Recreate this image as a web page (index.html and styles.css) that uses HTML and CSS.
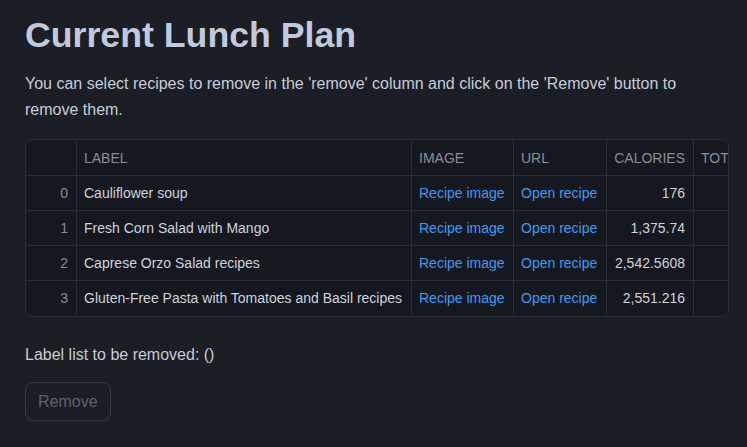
FILE: index.html
```html
<!DOCTYPE html>
<html>
<head>
<meta charset="utf-8">
<link rel="stylesheet" href="styles.css">
</head>
<body>
<main class="page">
  <h1 class="title">Current Lunch Plan</h1>
  <p class="intro">You can select recipes to remove in the 'remove' column and click on the 'Remove' button to remove them.</p>
  <div class="table-wrap">
    <table class="grid">
      <thead>
        <tr>
          <th class="c-idx"></th>
          <th class="c-label">LABEL</th>
          <th class="c-img">IMAGE</th>
          <th class="c-url">URL</th>
          <th class="c-cal">CALORIES</th>
          <th class="c-tot">TOTAL</th>
        </tr>
      </thead>
      <tbody>
        <tr><td class="c-idx">0</td><td>Cauliflower soup</td><td class="link">Recipe image</td><td class="link">Open recipe</td><td class="num">176</td><td></td></tr>
        <tr><td class="c-idx">1</td><td>Fresh Corn Salad with Mango</td><td class="link">Recipe image</td><td class="link">Open recipe</td><td class="num">1,375.74</td><td></td></tr>
        <tr><td class="c-idx">2</td><td>Caprese Orzo Salad recipes</td><td class="link">Recipe image</td><td class="link">Open recipe</td><td class="num">2,542.5608</td><td></td></tr>
        <tr><td class="c-idx">3</td><td>Gluten-Free Pasta with Tomatoes and Basil recipes</td><td class="link">Recipe image</td><td class="link">Open recipe</td><td class="num">2,551.216</td><td></td></tr>
      </tbody>
    </table>
  </div>
  <p class="removed">Label list to be removed: ()</p>
  <button class="btn" disabled>Remove</button>
</main>
</body>
</html>
```
FILE: styles.css
```css
html, body {
  margin: 0;
  padding: 0;
  background: #1b1e24;
  font-family: "Liberation Sans", Arial, sans-serif;
  color: #c6ccd8;
}
.page {
  padding: 14px 18px 0 25px;
}
.title {
  margin: 0;
  font-size: 35.7px;
  line-height: 42px;
  font-weight: 700;
  color: #c2c9dc;
}
.intro {
  margin: 15px 0 0;
  font-size: 16px;
  line-height: 26px;
  color: #c6ccd8;
}
.table-wrap {
  margin-top: 16px;
  width: 704px;
  height: 178px;
  box-sizing: border-box;
  border: 1px solid #2a2e35;
  border-radius: 8px;
  background: #15181e;
  overflow: hidden;
}
.grid {
  border-collapse: collapse;
  font-size: 14px;
  white-space: nowrap;
  table-layout: fixed;
  width: 740px;
}
.grid th, .grid td {
  border-right: 1px solid #2a2e35;
  border-bottom: 1px solid #2a2e35;
  padding: 0 8px 0 7px;
  height: 34px;
  overflow: hidden;
  text-align: left;
}
.grid th {
  height: 35px;
  font-weight: 400;
  color: #878e9b;
}
.grid tbody tr:last-child td { border-bottom: none; }
.c-idx { width: 35px; }
.c-label { width: 319px; }
.c-img { width: 86px; }
.c-url { width: 77px; }
.c-cal { width: 71px; text-align: right !important; }
.c-tot { width: 61px; }
.grid td.c-idx {
  text-align: right;
  color: #878e9b;
}
.grid td {
  color: #cdd3de;
}
.grid td.link { color: #3d9bf4; }
.grid td.num { text-align: right; }
.removed {
  margin: 27px 0 0;
  font-size: 16px;
  line-height: 22px;
  color: #c6ccd8;
}
.btn {
  margin-top: 16px;
  height: 39px;
  padding: 0 12px;
  background: transparent;
  border: 1px solid #363a42;
  border-radius: 8px;
  font-family: "Liberation Sans", Arial, sans-serif;
  font-size: 16px;
  color: #5d626b;
}
```
